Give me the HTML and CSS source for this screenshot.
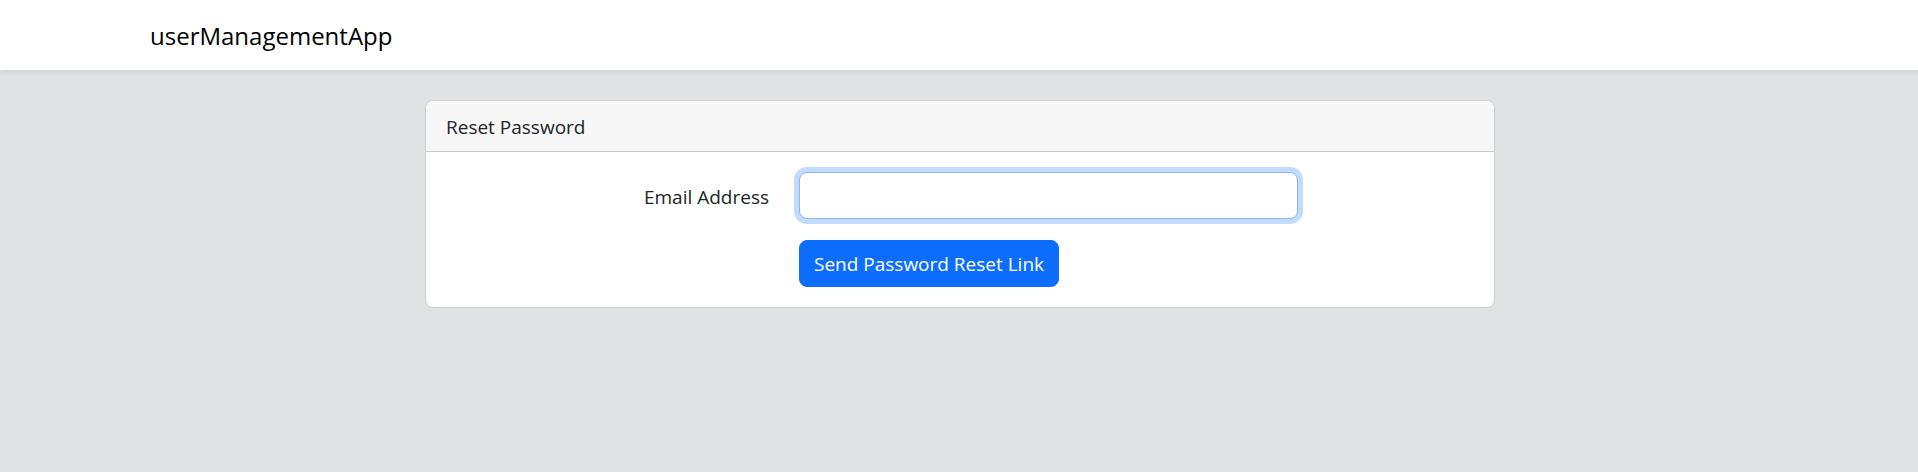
FILE: index.html
```html
<!DOCTYPE html>
<html lang="en">
<head>
<meta charset="utf-8">
<meta name="viewport" content="width=device-width, initial-scale=1">
<title>userManagementApp</title>
<link rel="stylesheet" href="styles.css">
</head>
<body>
<nav class="navbar">
  <div class="container">
    <a class="navbar-brand" href="#">userManagementApp</a>
  </div>
</nav>
<main class="main container">
  <section class="card">
    <div class="card-header">Reset Password</div>
    <form class="card-body">
      <label class="form-label" for="email">Email Address</label>
      <input class="form-control" id="email" type="email" name="email" autocomplete="email" required autofocus>
      <button class="btn" type="submit">Send Password Reset Link</button>
    </form>
  </section>
</main>
</body>
</html>
```

FILE: styles.css
```css
*,
*::before,
*::after {
  box-sizing: border-box;
}

body {
  margin: 0;
  background: #e1e2e4;
  color: #212529;
  font-family: "Segoe UI", "Open Sans", "Noto Sans", sans-serif;
  font-size: 19px;
  line-height: 30px;
}

.container {
  width: 100%;
  max-width: 1650px;
  margin: 0 auto;
  padding: 0 14px 0 16px;
}

.navbar {
  padding: 16px 0 14px;
  background: #fff;
  box-shadow: 0 2px 5px rgba(0, 0, 0, 0.08);
}

.navbar-brand {
  display: inline-block;
  color: #000;
  font-size: 24px;
  line-height: 40px;
  text-decoration: none;
}

.main {
  padding-top: 30px;
  padding-bottom: 30px;
}

.card {
  max-width: 1070px;
  margin: 0 auto;
  border: 1px solid #cecfd1;
  border-radius: 8px;
  background: #fff;
}

.card-header {
  padding: 11px 20px 9px;
  border-bottom: 1px solid #c8c9ca;
  border-radius: 7px 7px 0 0;
  background: #f7f7f7;
}

.card-body {
  display: grid;
  grid-template-columns: 323fr 499fr 146fr;
  gap: 21px 30px;
  padding: 20px;
}

.form-label {
  padding: 10px 0 7px;
  text-align: right;
}

.form-control {
  width: 100%;
  height: 47px;
  padding: 8px 15px;
  border: 1px solid #ced4da;
  border-radius: 8px;
  background: #fff;
  color: inherit;
  font: inherit;
  caret-color: transparent;
}

.form-control:focus {
  border-color: #86b7fe;
  outline: 0;
  box-shadow: 0 0 0 5px rgba(13, 110, 253, 0.25);
}

.btn {
  grid-column: 2;
  justify-self: start;
  height: 47px;
  padding: 8px 14px;
  border: 1px solid #0d6efd;
  border-radius: 8px;
  background: #0d6efd;
  color: #fff;
  font: inherit;
}
```
